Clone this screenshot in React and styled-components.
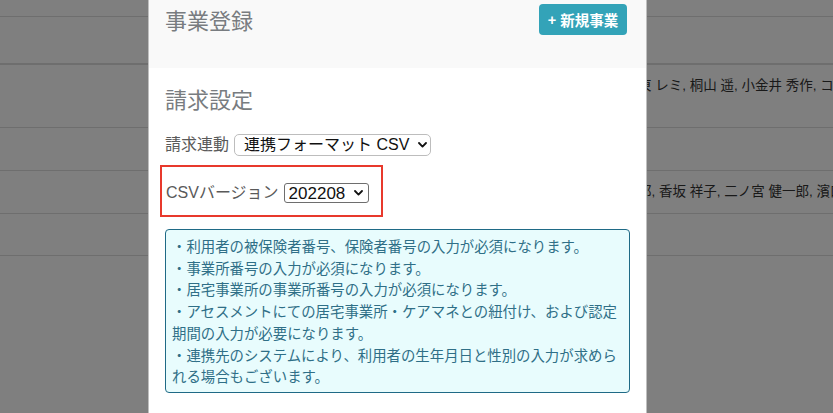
import React from "react";
import styled, { createGlobalStyle } from "styled-components";

const Global = createGlobalStyle`
  html, body { margin: 0; padding: 0; }
  body {
    width: 833px;
    height: 413px;
    overflow: hidden;
    background: #ffffff;
    font-family: "Liberation Sans", "Noto Sans CJK JP", sans-serif;
  }
  * { box-sizing: border-box; }
`;

const Page = styled.div`
  position: relative;
  width: 833px;
  height: 413px;
  overflow: hidden;
  background: #ffffff;
`;

const BgTable = styled.div`
  display: flex;
  flex-direction: column;
  width: 100%;
`;

const BgRow = styled.div`
  display: grid;
  grid-template-columns: 638px 1fr;
  height: ${(p) => p.$h}px;
  border-bottom: ${(p) => (p.$thick ? 2 : 1)}px solid #dddddd;
`;

const BgCell = styled.div`
  grid-column: 2;
  padding-top: 11px;
  font-size: 13.5px;
  line-height: 20px;
  color: #333333;
  white-space: nowrap;
  overflow: hidden;
`;

const Overlay = styled.div`
  position: absolute;
  inset: 0;
  background: rgba(0, 0, 0, 0.5);
  display: flex;
  align-items: stretch;
  padding-left: 148px;
`;

const Modal = styled.div`
  width: 499px;
  height: 100%;
  background: #ffffff;
  border-left: 1px solid rgba(0, 0, 0, 0.25);
  border-right: 1px solid rgba(0, 0, 0, 0.25);
  display: flex;
  flex-direction: column;
`;

const Header = styled.div`
  height: 68px;
  flex: none;
  background: #f9f9f9;
  display: flex;
  justify-content: space-between;
  align-items: flex-start;
  padding: 4px 19px 0 16px;
`;

const Title = styled.h2`
  margin: 0;
  padding-top: 2px;
  font-size: 22px;
  line-height: 31px;
  font-weight: 400;
  color: #787c80;
`;

const PrimaryButton = styled.button`
  height: 31px;
  width: 88px;
  border: none;
  border-radius: 4px;
  background: #33a3b8;
  color: #ffffff;
  font-family: inherit;
  font-size: 14.5px;
  font-weight: 600;
  padding: 0;
  display: flex;
  align-items: center;
  justify-content: center;
  gap: 4px;
`;

const Body = styled.div`
  padding: 0 15px 0 16px;
  display: flex;
  flex-direction: column;
  align-items: flex-start;
`;

const SectionTitle = styled.h3`
  margin: 18px 0 0;
  font-size: 22px;
  line-height: 30px;
  font-weight: 400;
  color: #787c80;
`;

const FormRow = styled.div`
  display: flex;
  align-items: center;
  gap: ${(p) => p.$gap || 5}px;
  margin-top: 18px;
`;

const Label = styled.span`
  font-size: 16px;
  color: #5a5a5a;
  line-height: 20px;
  white-space: nowrap;
`;

const Highlight = styled.div`
  margin-top: 9px;
  margin-left: -5px;
  width: 223px;
  height: 52px;
  border: 2px solid #e8392c;
  padding: 14px 0 0 4px;
  display: flex;
  align-items: flex-start;
  gap: 5px;
`;

const HighlightLabel = styled(Label)`
  line-height: 20px;
  margin-top: 2px;
`;

const SelectWrap = styled.div`
  position: relative;
  display: inline-flex;
  margin-top: ${(p) => p.$mt || 0}px;
`;

const Select = styled.select`
  appearance: none;
  -webkit-appearance: none;
  width: ${(p) => p.$w}px;
  height: ${(p) => p.$h}px;
  border: 1px solid ${(p) => (p.$dark ? "#6e6e6e" : "#bdbdbd")};
  border-radius: ${(p) => (p.$dark ? 3 : 5)}px;
  background: #ffffff;
  color: #111111;
  font-family: "Liberation Sans", "Noto Sans CJK JP", sans-serif;
  font-size: ${(p) => p.$fs || 16}px;
  line-height: 1;
  padding: 0 0 0 ${(p) => p.$pl}px;
  margin: 0;
  outline: none;
`;

const Chevron = styled.svg`
  position: absolute;
  right: ${(p) => p.$r}px;
  top: 50%;
  transform: translateY(-50%);
  pointer-events: none;
`;

const InfoBox = styled.div`
  margin-top: 12px;
  width: 465px;
  border: 1px solid #1f6a86;
  border-radius: 4px;
  background: #e8fcfd;
  color: #2f6f87;
  padding: 5px 6px;
  font-family: "Noto Sans CJK JP", "Liberation Sans", sans-serif;
  font-size: 14.4px;
  line-height: 21.7px;
`;

const InfoLine = styled.div``;

function ChevronIcon({ right }) {
  return (
    <Chevron $r={right} width="9" height="6" viewBox="0 0 9 6">
      <path d="M1 1 L4.5 4.6 L8 1" fill="none" stroke="#111" strokeWidth="1.8" strokeLinecap="round" strokeLinejoin="round" />
    </Chevron>
  );
}

const rows = [
  { h: 17 },
  { h: 48, thick: true },
  { h: 63, text: "東 レミ, 桐山 遥, 小金井 秀作, コバヤシ タロウ" },
  { h: 43 },
  { h: 43, text: "郎, 香坂 祥子, 二ノ宮 健一郎, 濱口 陽子" },
  { h: 42 },
];

const notes = [
  "・利用者の被保険者番号、保険者番号の入力が必須になります。",
  "・事業所番号の入力が必須になります。",
  "・居宅事業所の事業所番号の入力が必須になります。",
  "・アセスメントにての居宅事業所・ケアマネとの紐付け、および認定期間の入力が必要になります。",
  "・連携先のシステムにより、利用者の生年月日と性別の入力が求められる場合もございます。",
];

export default function App() {
  return (
    <Page>
      <Global />
      <BgTable>
        {rows.map((r, i) => (
          <BgRow key={i} $h={r.h} $thick={r.thick}>
            {r.text && <BgCell>{r.text}</BgCell>}
          </BgRow>
        ))}
      </BgTable>
      <Overlay>
        <Modal>
          <Header>
            <Title>事業登録</Title>
            <PrimaryButton>
              <span>+</span>
              <span>新規事業</span>
            </PrimaryButton>
          </Header>
          <Body>
            <SectionTitle>請求設定</SectionTitle>
            <FormRow>
              <Label>請求連動</Label>
              <SelectWrap>
                <Select $w={197} $h={22} $pl={9} defaultValue="csv">
                  <option value="csv">連携フォーマット CSV</option>
                </Select>
                <ChevronIcon right={4} />
              </SelectWrap>
            </FormRow>
            <Highlight>
              <HighlightLabel>CSVバージョン</HighlightLabel>
              <SelectWrap $mt={2}>
                <Select $w={85} $h={20} $pl={4} $fs={17} $dark defaultValue="202208">
                  <option value="202208">202208</option>
                </Select>
                <ChevronIcon right={6} />
              </SelectWrap>
            </Highlight>
            <InfoBox>
              {notes.map((n, i) => (
                <InfoLine key={i}>{n}</InfoLine>
              ))}
            </InfoBox>
          </Body>
        </Modal>
      </Overlay>
    </Page>
  );
}
